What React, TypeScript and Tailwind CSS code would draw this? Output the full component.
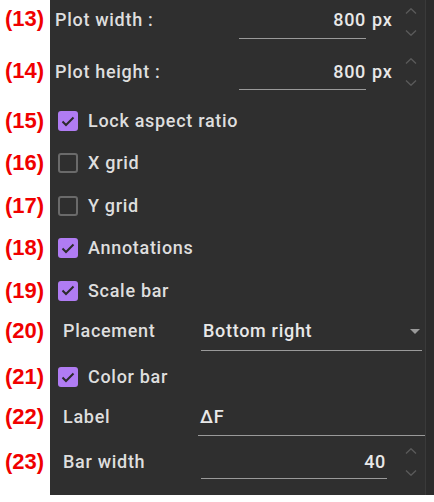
import React from 'react';

// --- small drawings ---
const Chevron = ({ up }: { up?: boolean }) => (
  <svg width="12" height="6" viewBox="0 0 12 6" fill="none" stroke="#5a5a5a" strokeWidth="1.4">
    <path d={up ? 'M1 5.5 L6 0.8 L11 5.5' : 'M1 0.5 L6 5.2 L11 0.5'} />
  </svg>
);

const Spinner = ({ top, gap, ml = 6 }: { top: number; gap: number; ml?: number }) => (
  <div className="mr-[8px] flex w-[12px] flex-col" style={{ paddingTop: top, gap, marginLeft: ml }}>
    <Chevron up />
    <Chevron />
  </div>
);

const Check = ({ checked }: { checked?: boolean }) =>
  checked ? (
    <div className="flex h-[20px] w-[20px] items-center justify-center rounded-[3px] bg-[#b07cf3]">
      <svg width="14" height="11" viewBox="0 0 14 11" fill="none" stroke="#2b2b2b" strokeWidth="2">
        <path d="M1.5 5.5 L5 9 L12.5 1.5" />
      </svg>
    </div>
  ) : (
    <div className="h-[20px] w-[20px] rounded-[3px] border-2 border-[#6a6a6a]" />
  );

const Num = ({ n }: { n: number }) => (
  <span className="font-['Liberation_Sans',Arial,sans-serif] text-[22px] font-bold leading-[26px] text-[#f00000]">
    ({n})
  </span>
);

const txt = 'text-[18px] font-medium leading-[20px] tracking-[0.7px]';

// row = red number on white + dark panel cell
const Row = ({
  n,
  h,
  numTop,
  center,
  children,
}: {
  n: number;
  h: number;
  numTop?: number;
  center?: boolean;
  children: React.ReactNode;
}) => (
  <div className="flex" style={{ height: h }}>
    <div className={`flex w-[50px] pl-[5px] ${center ? 'items-center' : 'items-start'}`} style={{ paddingTop: numTop }}>
      <Num n={n} />
    </div>
    <div className={`flex flex-1 bg-[#2f2f2f] ${center ? 'items-center' : 'items-start'}`}>{children}</div>
    <div className="w-[9px] border-l border-[#3a3a3a] bg-[#2b2b2b]" />
  </div>
);

const CheckRow = ({ n, h, label, checked }: { n: number; h: number; label: string; checked?: boolean }) => (
  <Row n={n} h={h} center>
    <div className="ml-[8px] flex items-center gap-[10px]">
      <Check checked={checked} />
      <span className={`${txt} text-[#dedede]`}>{label}</span>
    </div>
  </Row>
);

export default function App() {
  return (
    <div className="h-[502px] w-[434px] bg-white font-['Roboto','Noto_Sans',sans-serif]">
      {/* top edge of the panel */}
      <div className="flex h-[5px]">
        <div className="w-[50px]" />
        <div className="flex-1 bg-[#2f2f2f]" />
        <div className="w-[9px] border-l border-[#3a3a3a] bg-[#2b2b2b]" />
      </div>

      {/* --- PLOT SIZE --- */}
      <Row n={13} h={47} numTop={1}>
        <span className={`ml-[5px] mt-[5px] flex-1 ${txt} text-[#dedede]`}>Plot width :</span>
        <div className={`h-[34px] w-[127px] border-b border-[#9a9a9a] pt-[5px] text-right ${txt} text-[#e8e8e8]`}>
          800
        </div>
        <span className={`mt-[5px] w-[33px] pl-[6px] ${txt} text-[#e8e8e8]`}>px</span>
        <Spinner top={3} gap={16} />
      </Row>
      <Row n={14} h={48} numTop={6}>
        <span className={`ml-[5px] mt-[10px] flex-1 ${txt} text-[#dedede]`}>Plot height :</span>
        <div className={`h-[38px] w-[127px] border-b border-[#9a9a9a] pt-[10px] text-right ${txt} text-[#e8e8e8]`}>
          800
        </div>
        <span className={`mt-[10px] w-[33px] pl-[6px] ${txt} text-[#e8e8e8]`}>px</span>
        <Spinner top={6} gap={16} />
      </Row>

      {/* --- OPTIONS --- */}
      <CheckRow n={15} h={42} label="Lock aspect ratio" checked />
      <CheckRow n={16} h={42} label="X grid" />
      <CheckRow n={17} h={43} label="Y grid" />
      <CheckRow n={18} h={42} label="Annotations" checked />
      <CheckRow n={19} h={43} label="Scale bar" checked />

      <Row n={20} h={46} numTop={6}>
        <span className={`ml-[13px] mt-[9px] w-[138px] ${txt} text-[#dedede]`}>Placement</span>
        <div className="mr-[3px] flex h-[39px] flex-1 items-start justify-between border-b border-[#9a9a9a] pl-[2px] pt-[9px]">
          <span className={`${txt} text-[#e8e8e8]`}>Bottom right</span>
          <svg className="mr-[2px] mt-[8px]" width="10" height="5" viewBox="0 0 10 5">
            <path d="M0 0 L10 0 L5 5 Z" fill="#9a9a9a" />
          </svg>
        </div>
      </Row>

      <CheckRow n={21} h={38} label="Color bar" checked />

      <Row n={22} h={45} numTop={8}>
        <span className={`ml-[13px] mt-[11px] w-[135px] ${txt} text-[#dedede]`}>Label</span>
        <div className={`h-[40px] flex-1 border-b border-[#9a9a9a] pl-[2px] pt-[11px] ${txt} text-[#e8e8e8]`}>ΔF</div>
      </Row>
      <Row n={23} h={54} numTop={8}>
        <span className={`ml-[13px] mt-[11px] flex-1 ${txt} text-[#dedede]`}>Bar width</span>
        <div className={`h-[38px] w-[186px] border-b border-[#9a9a9a] pr-[1px] pt-[11px] text-right ${txt} text-[#e8e8e8]`}>
          40
        </div>
        <Spinner top={7} gap={16} ml={18} />
      </Row>
    </div>
  );
}
